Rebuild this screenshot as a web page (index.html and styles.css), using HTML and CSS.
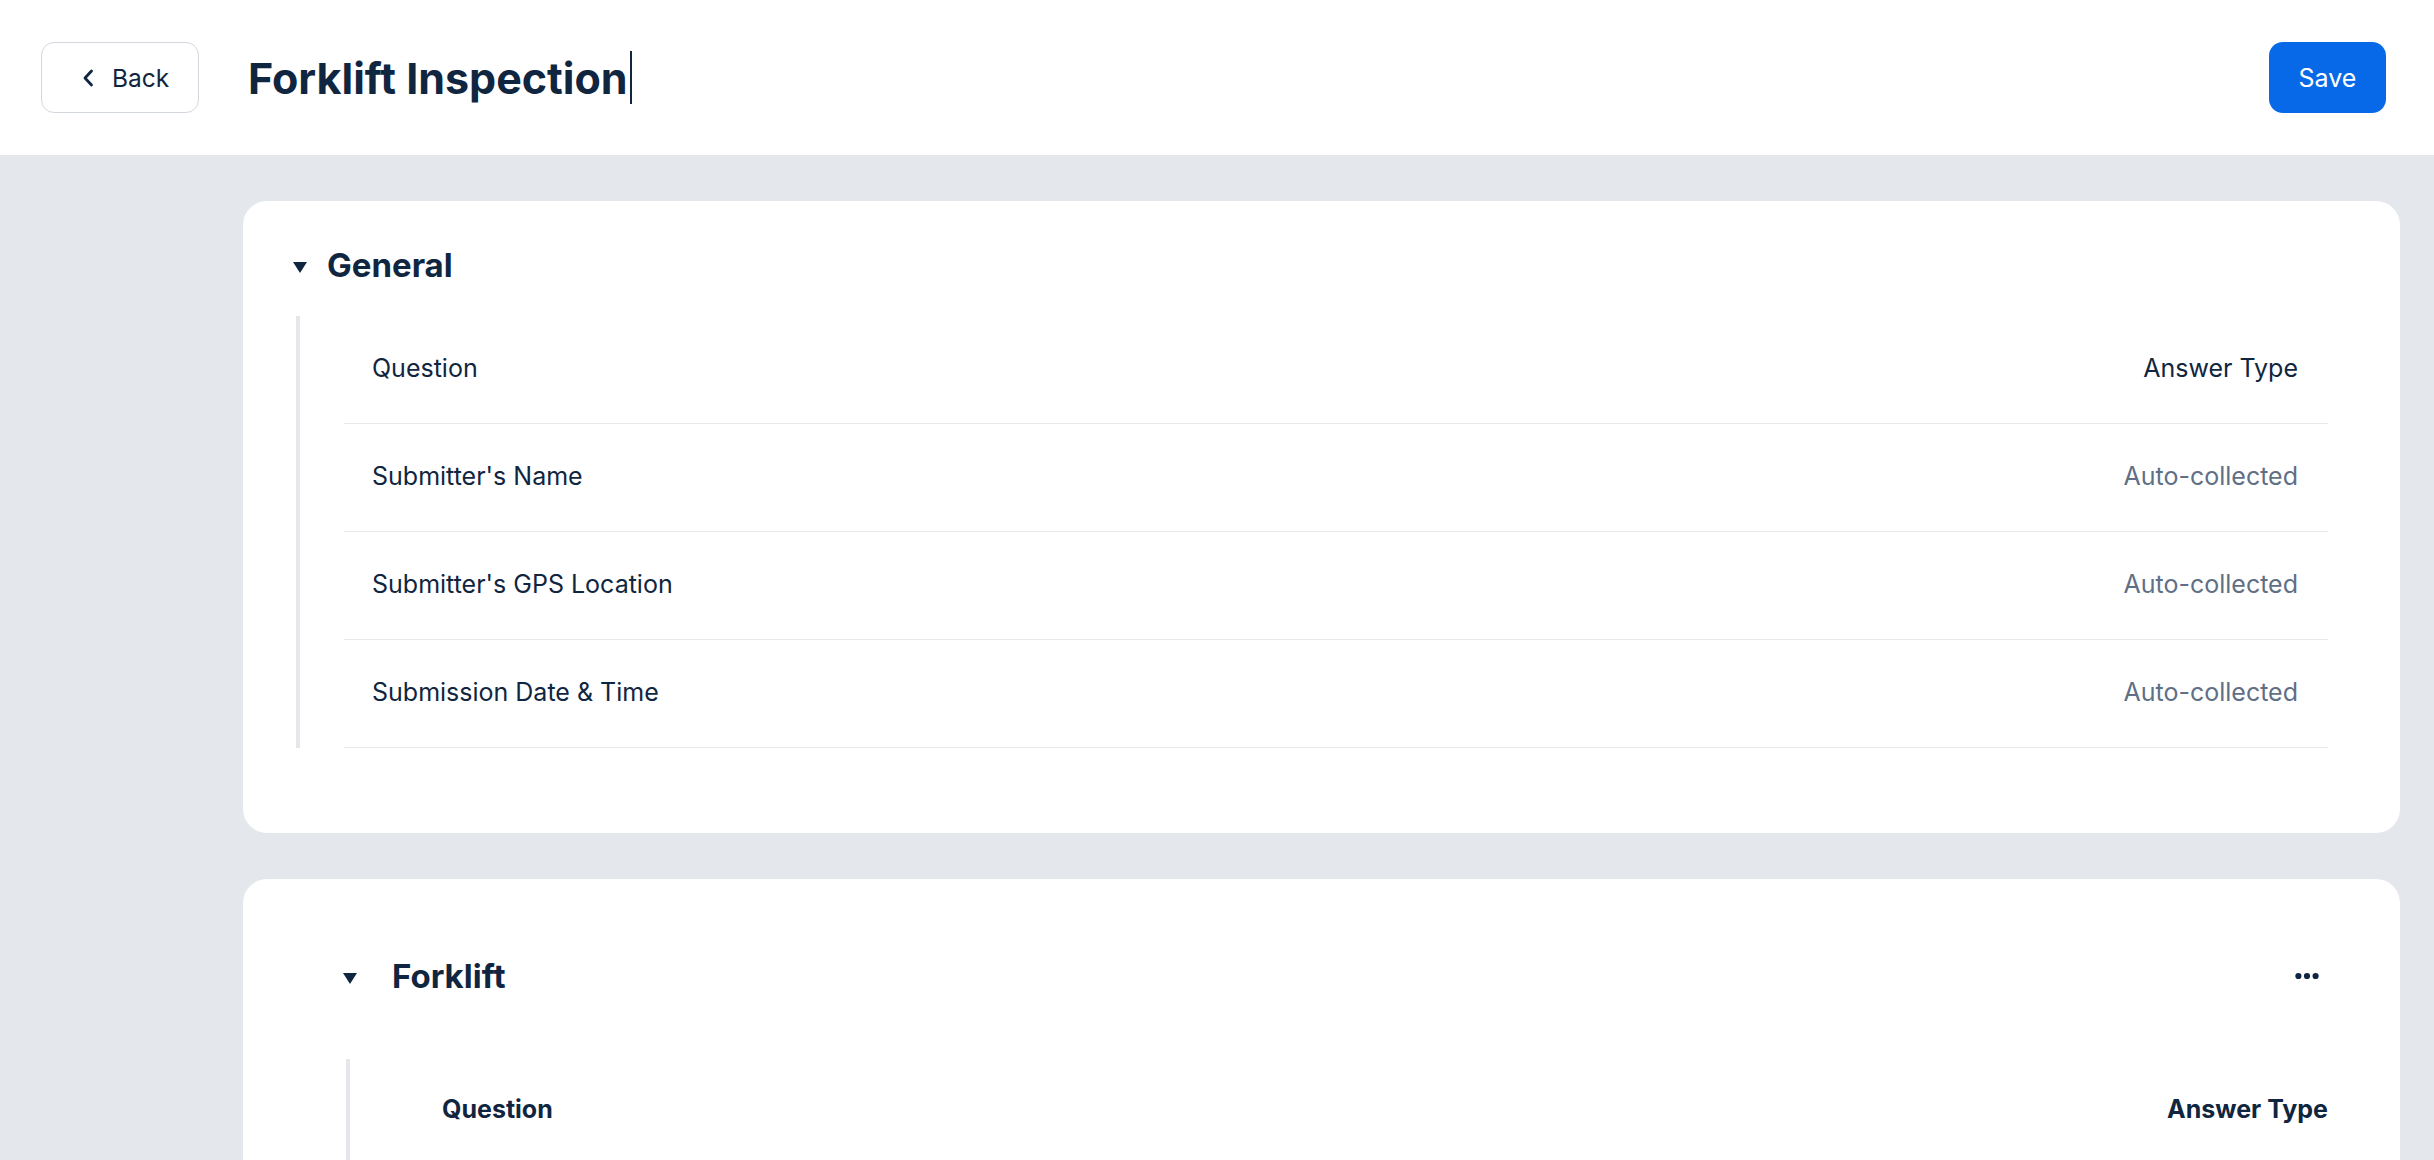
FILE: index.html
```html
<!DOCTYPE html>
<html lang="en">
<head>
<meta charset="utf-8">
<title>Forklift Inspection</title>
<link rel="stylesheet" href="styles.css">
</head>
<body>
<header class="topbar">
  <button class="back-btn" type="button">
    <svg class="back-icon" viewBox="0 0 24 24" width="24" height="24" aria-hidden="true">
      <polyline points="15.5,5 9,12 15.5,19" fill="none" stroke="#102640" stroke-width="2.8" stroke-linecap="round" stroke-linejoin="round"/>
    </svg>
    <span>Back</span>
  </button>
  <h1 class="title">Forklift Inspection<span class="caret-cursor"></span></h1>
  <button class="save-btn" type="button">Save</button>
</header>

<main class="content">
  <section class="card card-general">
    <div class="section-head">
      <svg class="tri" viewBox="0 0 14 11" width="14" height="11" aria-hidden="true"><polygon points="0,0 14,0 7,11" fill="#102640"/></svg>
      <h2 class="section-title">General</h2>
    </div>
    <div class="section-body">
      <div class="row">
        <span>Question</span>
        <span>Answer Type</span>
      </div>
      <div class="row">
        <span>Submitter's Name</span>
        <span class="muted">Auto-collected</span>
      </div>
      <div class="row">
        <span>Submitter's GPS Location</span>
        <span class="muted">Auto-collected</span>
      </div>
      <div class="row">
        <span>Submission Date &amp; Time</span>
        <span class="muted">Auto-collected</span>
      </div>
    </div>
  </section>

  <section class="card card-forklift">
    <div class="section-head">
      <svg class="tri" viewBox="0 0 14 11" width="14" height="11" aria-hidden="true"><polygon points="0,0 14,0 7,11" fill="#102640"/></svg>
      <h2 class="section-title wide-gap">Forklift</h2>
      <button class="more-btn" type="button" aria-label="More">
        <svg viewBox="0 0 24 8" width="24" height="8" aria-hidden="true">
          <circle cx="3.4" cy="4" r="3.1" fill="#102640"/>
          <circle cx="12" cy="4" r="3.1" fill="#102640"/>
          <circle cx="20.6" cy="4" r="3.1" fill="#102640"/>
        </svg>
      </button>
    </div>
    <div class="section-body body-forklift">
      <div class="row row-head">
        <span>Question</span>
        <span>Answer Type</span>
      </div>
    </div>
  </section>
</main>
</body>
</html>
```

FILE: styles.css
```css
* { box-sizing: border-box; }

html, body {
  margin: 0;
  padding: 0;
  height: 100%;
  overflow: hidden;
}

body {
  background: #e4e7ec;
  font-family: Inter, "Noto Sans", "Liberation Sans", sans-serif;
  font-size: 25px;
  color: #102640;
}

button {
  font-family: inherit;
  cursor: pointer;
}

.topbar {
  height: 155px;
  background: #ffffff;
  display: flex;
  align-items: center;
  padding: 0 48px 0 41px;
}

.back-btn {
  width: 158px;
  height: 71px;
  display: flex;
  align-items: center;
  gap: 12px;
  padding: 0 0 0 34px;
  background: #ffffff;
  border: 1.5px solid #d3d8df;
  border-radius: 13px;
  font-size: 24.5px;
  color: #102640;
}

.back-icon { display: block; flex: none; }

.title {
  margin: 0 0 0 49px;
  font-size: 43px;
  font-weight: 700;
  line-height: 56px;
  color: #102640;
  display: flex;
  align-items: center;
  flex: 1;
}

.caret-cursor {
  display: inline-block;
  width: 2px;
  height: 53px;
  margin-left: 2px;
  background: #102640;
}

.save-btn {
  width: 117px;
  height: 71px;
  border: none;
  border-radius: 14px;
  background: #0769e8;
  color: #ffffff;
  font-size: 25px;
}

.content {
  padding: 46px 34px 0 243px;
  display: flex;
  flex-direction: column;
  gap: 46px;
}

.card {
  background: #ffffff;
  border-radius: 24px;
}

.card-general {
  padding: 42px 72px 85px 50px;
}

.card-forklift {
  padding: 75px 72px 200px 100px;
}

.section-head {
  display: flex;
  align-items: center;
  height: 44px;
}

.tri {
  display: block;
  flex: none;
  margin-top: 4px;
}

.section-title {
  margin: 0 0 0 20px;
  font-size: 33px;
  font-weight: 700;
  line-height: 44px;
  color: #102640;
}

.section-title.wide-gap { margin-left: 35px; }

.more-btn {
  margin-left: auto;
  padding: 8px 9px;
  background: none;
  border: none;
  display: flex;
  align-items: center;
}

.more-btn svg { display: block; }

.section-body {
  margin: 29px 0 0 3px;
  border-left: 4px solid #e5e7eb;
  padding-left: 44px;
}

.row {
  height: 108px;
  display: flex;
  align-items: center;
  justify-content: space-between;
  padding: 0 30px 3px 28px;
  border-bottom: 1px solid #e7e9ed;
  line-height: 32px;
}

.muted { color: #5f6f86; }

.body-forklift {
  margin-top: 61px;
}

.row-head {
  height: 102px;
  padding: 0 0 2px 48px;
  font-weight: 700;
  border-bottom: none;
}
```
